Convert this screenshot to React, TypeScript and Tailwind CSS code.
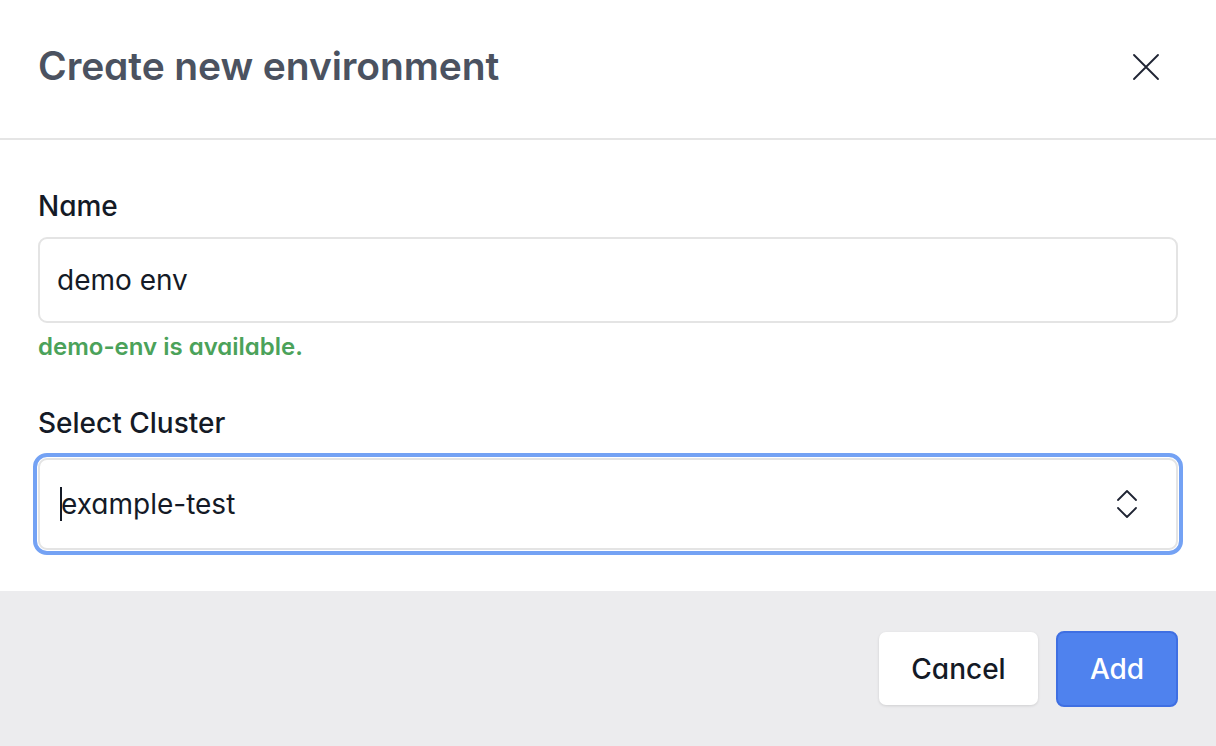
import React from 'react';

export default function App() {
  return (
    <div className="w-[1216px] h-[746px] bg-white flex flex-col font-['Inter',sans-serif] [font-feature-settings:'cv11'] overflow-hidden">
      {/* header */}
      <div className="h-[140px] shrink-0 flex items-center justify-between pl-[38px] pr-[54px] pb-[5px] border-b-2 border-[#e5e5e5]">
        <h1 className="text-[39px] font-semibold text-[#4b5260] tracking-[-0.1px]">Create new environment</h1>
        <button className="text-[#1f2433]">
          <svg width="32" height="32" viewBox="0 0 24 24" fill="none" stroke="currentColor" strokeWidth="1.4" strokeLinecap="round">
            <path d="M3 3l18 18M21 3L3 21" />
          </svg>
        </button>
      </div>

      {/* body */}
      <div className="flex-1 px-[38px] pt-[49px]">
        <label className="block text-[28px] leading-[34px] font-medium text-[#141a26]">Name</label>
        <div className="mt-[14px] h-[86px] rounded-[9px] border-2 border-[#e4e4e4] flex items-center px-[17px] text-[28px] text-[#141a26]">
          demo env
        </div>
        <p className="mt-[10px] text-[24px] leading-[28px] font-semibold text-[#4ba25a]">demo-env is available.</p>

        <label className="block mt-[45px] text-[28px] leading-[34px] font-medium text-[#141a26]">Select Cluster</label>
        <div className="mt-[18px] h-[92px] rounded-[9px] border-2 border-[#e4e4e4] outline-[4px] outline-solid outline-[#74a2f4] outline-offset-[1px] flex items-center pl-[20px] pr-[36px] text-[28px] text-[#141a26]">
          <span className="w-[2px] h-[34px] bg-[#141a26] mr-[-1px]" />
          <span className="flex-1">example-test</span>
          <svg width="26" height="34" viewBox="0 0 26 34" fill="none" stroke="#1f2433" strokeWidth="1.8" strokeLinecap="round" strokeLinejoin="round">
            <path d="M4 13l9-9 9 9M4 21l9 9 9-9" />
          </svg>
        </div>
      </div>

      {/* footer */}
      <div className="h-[155px] shrink-0 bg-[#ececee] flex items-start justify-end gap-[18px] pt-[41px] pr-[38px]">
        <button className="w-[159px] h-[73px] rounded-[7px] bg-white shadow-[0_1px_3px_rgba(0,0,0,0.12)] text-[28px] font-medium text-[#141a26]">
          Cancel
        </button>
        <button className="w-[122px] h-[76px] -mt-[1px] rounded-[8px] bg-[#4f82ee] border-2 border-[#3f6fe2] text-[28px] font-medium text-white">
          Add
        </button>
      </div>
    </div>
  );
}
